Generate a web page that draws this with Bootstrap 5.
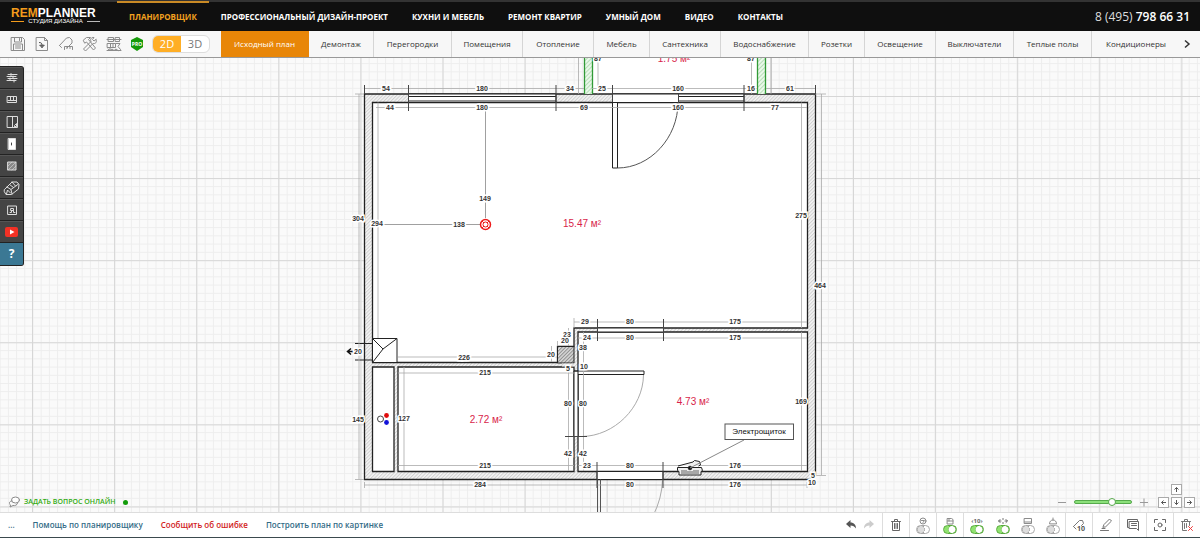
<!DOCTYPE html>
<html lang="ru">
<head>
<meta charset="utf-8">
<meta name="viewport" content="width=device-width, initial-scale=1">
<title>Remplanner — планировщик</title>
<link href="https://cdn.jsdelivr.net/npm/bootstrap@5.3.0/dist/css/bootstrap.min.css" rel="stylesheet">
<style>
  body { font-family: "Open Sans", "Noto Sans", sans-serif; font-size: 8px; line-height: 12px; color: #444; background: #fff; }
  a { text-decoration: none; }
  button { border: 0; padding: 0; background: none; color: inherit; }
  svg { display: block; }
  .ico { fill: none; stroke: #8b8b8b; stroke-width: 1; stroke-linejoin: round; stroke-linecap: round; }

  .site-head { height: 31px; background: #0f0f0f; border-top: 2px solid #333; }
  .brand { width: 89px; margin-left: 11px; margin-right: 17px; font-family: "Liberation Sans", Arial, sans-serif; color: #fff; }
  .brand-name { font-size: 12px; line-height: 10px; font-weight: 700; }
  .brand-name span { color: #f39c1c; }
  .brand-sub { font-size: 6px; line-height: 7px; white-space: nowrap; }
  .brand-sub::before, .brand-sub::after { content: ""; flex: 1; height: 1px; background: #b9b9b9; }
  .brand-sub::before { background: #f39c1c; }
  .site-nav a { color: #fff; font-weight: 700; line-height: 27px; padding: 0 12px; white-space: nowrap; border-top: 2px solid transparent; margin-top: -1px; }
  .site-nav a.current { color: #f2a11f; border-color: #c98a25; }
  .phone { font-size: 12px; color: #ddd; margin-right: 10px; white-space: nowrap; }
  .phone b { font-weight: 600; color: #fff; }

  .tool-row { height: 27px; background: #f7f7f7; border-bottom: 1px solid #999; }
  .file-tools { width: 221px; padding-left: 10px; }
  .view-switch { width: 58px; height: 18px; border: 1px solid #ddd; border-radius: 6px; background: #fff; overflow: hidden; font-size: 11px; font-weight: 700; color: #777; }
  .view-switch .on { background: #ffae25; color: #fff; }
  .plan-tabs a { color: #333; border-right: 1px solid #d5d5d5; line-height: 26px; text-align: center; white-space: nowrap; flex: 0 0 auto; }
  .plan-tabs a.current { background: #e88608; color: #fff; border-color: #e88608; }
  .w-xs { width: 56px; } .w-s { width: 65px; } .w-m { width: 71px; } .w-l { width: 78px; } .w-xl { width: 88px; }
  .more { width: 24px; }

  .board { background: #fafafa; min-height: 0; overflow: hidden; }
  .board > svg { position: absolute; inset: 0; width: 100%; height: 100%; }
  .dim text { font: 7px "Liberation Sans", Arial, sans-serif; fill: #333; text-anchor: middle; stroke: #fff; stroke-width: 3px; paint-order: stroke; font-weight: 700; }
  .area text { font: 10px "Liberation Sans", Arial, sans-serif; fill: #d81e4a; text-anchor: middle; }
  .side-menu { position: absolute; left: 0; top: 8px; width: 24px; border: 1px solid #222; border-left: 0; border-radius: 0 3px 3px 0; background: #444; overflow: hidden; }
  .side-menu button { height: 22px; width: 100%; border-bottom: 1px solid #222; border-top: 1px solid #555; }
  .side-menu svg { stroke: #ddd; }
  .side-menu .help { background: #3b7894; border-color: #3b7894; color: #fff; font-size: 12px; font-weight: 700; }
  .ask { position: absolute; left: 9px; bottom: 4px; color: #32ab12; font-weight: 600; font-size: 7px; }
  .dot { width: 5px; height: 5px; border-radius: 50%; background: #129c0a; }
  .zoomer { position: absolute; right: 52px; bottom: 4px; color: #999; }
  .zoomer input { -webkit-appearance: none; appearance: none; width: 58px; height: 4px; border: 1px solid #55aa4b; border-radius: 2px; background: #8ce07b; margin: 0; }
  .zoomer input::-webkit-slider-thumb { -webkit-appearance: none; width: 8px; height: 8px; border-radius: 50%; background: #fff; border: 1px solid #57a94b; }
  .pan { position: absolute; right: 5px; bottom: 4px; display: grid; grid-template-columns: repeat(3, 11px); gap: 2px; }
  .pan button { height: 11px; border: 1px solid #aaa; background: #fff; }
  .pan .up { grid-column: 2; } .pan .left { grid-column: 1; }

  .foot { height: 26px; background: #fff; border-top: 1px solid #ddd; border-bottom: 1px solid #3b4a4e; }
  .foot-links { gap: 18px; font-weight: 600; }
  .foot-links a { color: #336b86; white-space: nowrap; }
  .foot-links a.report { color: #d21d1d; }
  .acts > * { width: 25px; height: 24px; }
  .acts .slim { width: 18px; }
  .acts .cell { width: 27px; border-left: 1px solid #ddd; }
  .flip { appearance: none; width: 14px; height: 9px; border: 1px solid #aaa; border-radius: 5px; background: radial-gradient(circle at 4px 50%, #ddd 3px, #999 4px, #fff 4px); margin: 0; display: block; }
  .flip:checked { border-color: #5aab3f; background: radial-gradient(circle at 8px 50%, #fff 3px, #5aab3f 4px, #90e36f 4px); }
</style>
</head>
<body class="vh-100 d-flex flex-column overflow-hidden">

<header class="site-head d-flex align-items-center flex-shrink-0">
  <a class="brand flex-shrink-0" href="#">
    <div class="brand-name"><span>REM</span>PLANNER</div>
    <div class="brand-sub d-flex align-items-center gap-1">СТУДИЯ ДИЗАЙНА</div>
  </a>
  <nav class="site-nav d-flex align-self-start">
    <a class="current" href="#">ПЛАНИРОВЩИК</a>
    <a href="#">ПРОФЕССИОНАЛЬНЫЙ ДИЗАЙН-ПРОЕКТ</a>
    <a href="#">КУХНИ И МЕБЕЛЬ</a>
    <a href="#">РЕМОНТ КВАРТИР</a>
    <a href="#">УМНЫЙ ДОМ</a>
    <a href="#">ВИДЕО</a>
    <a href="#">КОНТАКТЫ</a>
  </nav>
  <a class="phone ms-auto" href="tel:+74957986631">8 (495) <b>798 66 31</b></a>
</header>

<div class="tool-row d-flex flex-shrink-0">
  <div class="file-tools d-flex align-items-center flex-shrink-0">
    <div class="d-flex align-items-center gap-2">
      <button aria-label="Сохранить"><svg class="ico" width="16" height="16"><path d="M1.500 1.500h11l2 2v11h-13zM4.500 1.500v4.500h7v-4.500M9.500 2.500v2M3.500 14v-6h9v6M5.500 10h5M5.500 12h5"/></svg></button>
      <button aria-label="Загрузить"><svg class="ico" width="16" height="16"><path d="M2.500 1.500h8l3 3v10h-11zM10.500 1.500v3h3"/><path d="M5.500 6.500c2 0 2.500 1 2.500 3v2M6 9.500l2 2 2-2z" stroke="#444"/></svg></button>
      <button aria-label="Рулетка"><svg class="ico" width="16" height="16"><path d="M1.500 9.500l7-7.500 3-.5 2.500 2.500v3l-5 5M1.500 9.500l2 2M6.500 13.500v-3h8v3M9 12.500v-2M12 12.500v-2"/></svg></button>
      <button aria-label="Инструменты"><svg class="ico" width="16" height="16"><path d="M1.500 4l3-2.500h4l-2 2 7 8.500-2 2-7-8-1.500 1zM14 3.500l-2 1.500-1.500-1.500 1.500-2c-3-.5-4 2-3 4l-7.500 7.500 2 2 7.500-7.500c2 .5 4.500-1 3-4"/></svg></button>
      <button aria-label="Смета"><svg class="ico" width="16" height="16"><path d="M2.500 1.500h5v4h-5zM9.500 1.500h4v4h-4zM1 3.500h14M1.500 7.500h8v4h-8zM10 7.500h4l-2 3 2.500 3M4 11.500v2M1 14.500h14M4.500 7.500v4M7 7.500v4M2 13l2 1.500L6 13l2 1.500L10 13l2 1.500"/></svg></button>
      <button aria-label="PRO"><svg width="14" height="16"><path d="M7 1l6 3v7l-6 4-6-4V4z" fill="#159a09"/><text x="7" y="10" text-anchor="middle" font-size="5" font-weight="700" fill="#fff">PRO</text></svg></button>
    </div>
    <div class="view-switch d-flex ms-2"><button class="on w-50">2D</button><button class="w-50">3D</button></div>
  </div>
  <nav class="plan-tabs d-flex flex-grow-1 overflow-hidden">
    <a class="w-xl current" href="#">Исходный план</a>
    <a class="w-s" href="#">Демонтаж</a>
    <a class="w-l" href="#">Перегородки</a>
    <a class="w-m" href="#">Помещения</a>
    <a class="w-m" href="#">Отопление</a>
    <a class="w-xs" href="#">Мебель</a>
    <a class="w-m" href="#">Сантехника</a>
    <a class="w-xl" href="#">Водоснабжение</a>
    <a class="w-xs" href="#">Розетки</a>
    <a class="w-m" href="#">Освещение</a>
    <a class="w-l" href="#">Выключатели</a>
    <a class="w-l" href="#">Теплые полы</a>
    <a class="w-xl border-0" href="#">Кондиционеры</a>
  </nav>
  <button class="more flex-shrink-0" aria-label="Далее"><svg width="24" height="12"><path d="M9 2.500l4 3.500-4 3.500" fill="none" stroke="#333" stroke-width="1.500"/></svg></button>
</div>

<main class="board position-relative flex-grow-1">
  <svg viewBox="0 58 1200 454" preserveAspectRatio="xMidYMid slice">
    <defs>
      <pattern id="fine" width="8.200" height="8.200" patternUnits="userSpaceOnUse" x="32.500" y="96"><path d="M0 .5H8.200M.5 0V8.200" stroke="#ededed"/></pattern>
      <pattern id="coarse" width="82.100" height="82.100" patternUnits="userSpaceOnUse" x="32" y="96"><path d="M0 .5H82.100M.5 0V82.100" stroke="#d6d6d6"/></pattern>
      <pattern id="hatch" width="2.500" height="2.500" patternUnits="userSpaceOnUse" patternTransform="rotate(45)"><path fill="#f4f4f4" d="M0 0h3v3H0z"/><path d="M.5 0V3" stroke="#d0d0d0"/></pattern>
      <pattern id="dense" width="2.500" height="2.500" patternUnits="userSpaceOnUse" patternTransform="rotate(45)"><path fill="#d8d8d8" d="M0 0h3v3H0z"/><path d="M.5 0V3" stroke="#8c8c8c"/></pattern>
      <pattern id="leaf" width="3" height="3" patternUnits="userSpaceOnUse" patternTransform="rotate(45)"><path fill="#eaf8ea" d="M0 0h3v3H0z"/><path d="M.5 0V3" stroke="#b7deb7"/></pattern>
    </defs>
    <rect y="0" x="-400" width="2000" height="1000" fill="url(#fine)"/>
    <rect y="0" x="-400" width="2000" height="1000" fill="url(#coarse)"/>

    <!-- walls -->
    <path fill="#fff" d="M592 50h165v44h-165z"/>
    <path fill="url(#hatch)" stroke="#222" stroke-width="1.300" d="M364.500 94H815.500V475.500H811V479.500H364.500z"/>
    <path fill="#fff" stroke="#222" stroke-width="1.300" d="M372.500 102.500H807.500V328H574V346.500H557.500V362.500H372.500zM372.500 367H394V471.500H372.500zM398 367H574V471.500H398zM578 332H807.500V471.500H578z"/>
    <path fill="url(#dense)" stroke="#222" d="M557.500 346.500H574V363H557.500z"/>
    <path fill="url(#hatch)" d="M562 363.500h13v3h-13z"/>
    <path fill="url(#leaf)" d="M584.500 50h8v44h-8zM757.500 50h8v44h-8z"/>
    <path stroke="#319a36" stroke-width="1.300" d="M584.500 50V94M592.500 50V94M757.500 50V94M765.500 50V94"/>

    <!-- windows, doors, vent shaft -->
    <g fill="#fff" stroke="#222">
      <path d="M408.500 94H556V102.500H408.500zM408.500 96.500H556M408.500 101H556M678.500 94H744V102.500H678.500zM678.500 96.500H744M678.500 101H744"/>
      <path d="M612.500 94H678.500V102.500H612.500zM612.500 102.500H617.500V168H612.500z"/>
      <path d="M597.500 328H663.500V332H597.500zM597 471.500H663V479.500H597zM574 371H578V436.500H574zM574 371H644V374.500H578"/>
      <path d="M372.500 338.500H397V362.500H372.500zM372.500 338.500L383 349L397 338.500M383 349L372.500 362.500"/>
      <path fill="none" d="M355 343.500H372.500M355 360H372.500"/>
      <path fill="none" stroke="#555" d="M678 102.500C678 138 650 168 617.500 168M597.500 479.500V516M600.500 479.500V516"/>
      <path fill="none" stroke="#aaa" d="M643.500 375C643 408 614 436 582 436.500M662.500 480Q662 498 653 516"/>
    </g>
    <path d="M356 351.500H348M351 348.500L347.500 351.500L351 354.500" fill="none" stroke="#111" stroke-width="1.500"/>

    <!-- dimension lines -->
    <g fill="none" stroke="#aaa" stroke-width=".8">
      <path d="M364.500 88.500H584M592 88.500H757M766 88.500H815.500M376 107.500H807M359 94V479.500M378 102.500V338M821.500 94V475M801.500 102.500V328M801.500 332V471M355 94H364M815 94H826M355 479.500H364M364.500 482V488M364.500 485H807M807 482V488M598 50V94M751.500 50V94M578.500 50V94M771 50V94"/>
      <path d="M398 357H557M398 373H574M398 465.500H574M404 367V471M568.500 367V471M583.500 332V471M574 322H807M578 338H807M578 465.500H807M551.500 346V362M568.500 328V346M557.500 341V346M574 318V328M815 475.500H826"/>
      <path stroke="#888" d="M485.500 108V218M378 224.500H480"/>
    </g>
    <path d="M364.500 85V94M408.500 85V111M556 85V111M612.500 85V102M678.500 94V103M744 85V111M815.500 85V94M597.500 319V341M663.500 319V341M597 462V488M663 462V488M565 436.500H587" stroke="#444" fill="none"/>

    <g class="dim">
      <text x="386" y="91">54</text><text x="482" y="91">180</text><text x="570" y="91">34</text><text x="602" y="91">25</text><text x="678" y="91">160</text><text x="751" y="91">16</text><text x="790" y="91">61</text>
      <text x="390" y="110">44</text><text x="482" y="110">180</text><text x="584" y="110">69</text><text x="678" y="110">160</text><text x="775" y="110">77</text>
      <text x="598" y="61">87</text><text x="751" y="61">87</text>
      <text x="485" y="201">149</text><text x="459" y="227">138</text>
      <text x="358" y="221">304</text><text x="377" y="226">294</text><text x="801" y="218">275</text><text x="820" y="288">464</text><text x="801" y="404">169</text>
      <text x="358" y="354">20</text><text x="464" y="360">226</text><text x="485" y="375">215</text><text x="485" y="468">215</text><text x="480" y="487">284</text><text x="404" y="421">127</text><text x="358" y="422">145</text>
      <text x="585" y="324">29</text><text x="630" y="324">80</text><text x="735" y="324">175</text><text x="567" y="337">23</text><text x="565" y="343">20</text><text x="587" y="340">24</text><text x="630" y="340">80</text><text x="735" y="340">175</text>
      <text x="551" y="357">20</text><text x="583" y="350">38</text><text x="568" y="371">5</text><text x="584" y="369">10</text>
      <text x="568" y="406">80</text><text x="583" y="406">80</text><text x="568" y="456">42</text><text x="583" y="456">42</text>
      <text x="587" y="468">23</text><text x="630" y="468">80</text><text x="735" y="468">176</text><text x="630" y="487">80</text><text x="735" y="487">176</text><text x="812" y="485">10</text><text x="813" y="478">5</text>
    </g>
    <g class="area">
      <text x="582" y="227">15.47 м²</text><text x="486" y="423">2.72 м²</text><text x="693" y="405">4.73 м²</text><text x="674" y="62">1.75 м²</text>
    </g>

    <!-- lamp, risers, switchboard -->
    <g fill="none" stroke="#ee1c1c"><circle cx="485.500" cy="224.500" r="5" stroke-width="1.500"/><circle cx="485.500" cy="224.500" r="2.500"/><path d="M482 221l2 2M489 221l-2 2M482 228l2-2M489 228l-2-2"/></g>
    <circle cx="380.500" cy="419" r="3" fill="#fff" stroke="#444"/><circle cx="386.500" cy="415.500" r="2.400" fill="#e00c0c"/><circle cx="386.500" cy="422.500" r="2.400" fill="#1212d8"/>
    <g fill="#eee" stroke="#222"><path d="M677.500 467.500h24l1 3-1.500 1v3.500h-22v-3.500l-1.500-1z"/><path d="M678 466l15-4 1.500-1.500 5 1 1 3.500-2 1"/><path d="M682 470v4M684 470v4M686 470v4M688 471v3M690 471v3M692 471v3M694 470v4M696 470v4M698 470v4" stroke-width=".7"/><circle cx="690" cy="468" r="1.800" fill="#111"/></g>
    <path d="M744 440L690 468" stroke="#888"/>
    <rect x="725" y="424" width="68.500" height="15.500" fill="#fff" stroke="#555"/>
    <text x="759" y="434" text-anchor="middle" font-family="Liberation Sans, Arial, sans-serif" font-size="8" fill="#111">Электрощиток</text>
  </svg>

  <div class="side-menu d-flex flex-column">
    <button aria-label="Стены"><svg class="ico mx-auto" width="16" height="14"><path d="M4 3.500h9M3 5.500h9M4 7.500h9M3 9.500h9M7 2.500v2M9 5v2M6 7v2M10 9v2"/></svg></button>
    <button aria-label="Окна"><svg class="ico mx-auto" width="16" height="14"><path d="M3.500 3.500h9v6h-9zM6.500 3.500v4M9.500 3.500v4M4 7.500h8"/></svg></button>
    <button aria-label="Проёмы"><svg class="ico mx-auto" width="16" height="14"><path d="M3.500 1.500h10v11h-10zM8.500 1.500v11M10.500 10.500l2-2v3h-2"/></svg></button>
    <button aria-label="Двери"><svg class="ico mx-auto" width="16" height="14"><path d="M4.500 1.500h7v11h-7z" fill="#fff"/><path d="M7.500 6v2" stroke="#444"/></svg></button>
    <button aria-label="Полы"><svg class="ico mx-auto" width="16" height="14"><path d="M4 3h8v8H4z" fill="#888"/><path d="M4 7l4-4M4 11l8-8M8 11l4-4" stroke-width=".6"/></svg></button>
    <button aria-label="Материалы"><svg class="ico mx-auto" width="18" height="16"><path d="M1.500 9.500L9 2h5l2 2.500-.5 4.500-7 5.500H3L1.500 12zM4 7l4 2.500 1 4.500M8 9.500L15.500 4M6.500 4.500l4 3M3.500 14l1-4 3 3M9 2l3.500 4"/></svg></button>
    <button aria-label="Объекты"><svg class="ico mx-auto" width="16" height="14"><path d="M4 3h8.500v8.500H4zM6 9.500h1.500v-2h2v2H11M7 5.500h2.500v2H7z"/></svg></button>
    <button aria-label="Видео"><svg class="mx-auto" width="16" height="12" stroke-width="0"><rect x="1" y="1" width="13" height="10" rx="2" fill="#f33125"/><path d="M6 3.500l4.500 2.500L6 8.500z" fill="#fff"/></svg></button>
    <button class="help">?</button>
  </div>

  <a class="ask d-flex align-items-center gap-1" href="#">
    <svg class="ico" width="11" height="12"><ellipse cx="6.500" cy="4" rx="4" ry="3" fill="#fff"/><path d="M3 5C0 5-.5 8 1.500 9L1 11l3-1.500c2 .5 4-.5 4.500-2"/></svg>
    <span>ЗАДАТЬ ВОПРОС ОНЛАЙН</span><span class="dot ms-1"></span>
  </a>
  <div class="zoomer d-flex align-items-center gap-2">
    <button aria-label="Уменьшить"><svg width="8" height="12"><path d="M0 6.500h8" stroke="#999"/></svg></button>
    <input type="range" min="0" max="100" value="68" aria-label="Масштаб">
    <button aria-label="Увеличить"><svg width="8" height="12"><path d="M0 6.500h8M4 2.500v8" stroke="#999"/></svg></button>
  </div>
  <div class="pan">
    <button class="up" aria-label="Вверх"><svg class="mx-auto" width="9" height="9"><path d="M4.500 7V2.500M2.500 4.500l2-2 2 2" fill="none" stroke="#555"/></svg></button>
    <button class="left" aria-label="Влево"><svg class="mx-auto" width="9" height="9"><path d="M7 4.500H2.500M4.500 2.500l-2 2 2 2" fill="none" stroke="#555"/></svg></button>
    <button aria-label="Вниз"><svg class="mx-auto" width="9" height="9"><path d="M4.500 2v4.500M2.500 4.500l2 2 2-2" fill="none" stroke="#555"/></svg></button>
    <button aria-label="Вправо"><svg class="mx-auto" width="9" height="9"><path d="M2 4.500h4.500M4.500 2.500l2 2-2 2" fill="none" stroke="#555"/></svg></button>
  </div>
</main>

<footer class="foot d-flex align-items-center flex-shrink-0">
  <div class="foot-links d-flex ps-2">
    <a href="#">...</a>
    <a href="#">Помощь по планировщику</a>
    <a class="report" href="#">Сообщить об ошибке</a>
    <a href="#">Построить план по картинке</a>
  </div>
  <div class="acts d-flex ms-auto">
    <button class="slim" aria-label="Отменить"><svg class="mx-auto" width="12" height="12"><path d="M1 5l4.500-4v2.500C9 3.500 11 6 11 9.500 9.500 7.500 8 6.500 5.500 6.500V9z" fill="#555"/></svg></button>
    <button class="slim me-1" aria-label="Повторить"><svg class="mx-auto" width="12" height="12"><path d="M11 5L6.500 1v2.500C3 3.500 1 6 1 9.500 2.500 7.500 4 6.500 6.500 6.500V9z" fill="#ccc"/></svg></button>
    <button class="cell" aria-label="Удалить"><svg class="ico mx-auto" width="12" height="14"><path d="M1.500 3.500h9M4.500 3V1.500h3V3M2.500 3.500v9h7v-9M4.500 5.500v5M6 5.500v5M7.500 5.500v5" stroke="#666"/></svg></button>
    <label class="cell d-flex flex-column align-items-center justify-content-center"><svg class="ico" width="12" height="8"><circle cx="6" cy="4" r="3"/><path d="M4.500 3.500h3L6 5.500"/></svg><input class="flip" type="checkbox" aria-label="Площади"></label>
    <label class="cell d-flex flex-column align-items-center justify-content-center"><svg class="ico" width="12" height="8"><path d="M3.500 1.500h4l1.500 1v4.500H3.500zM3.500 4h5.500M5 1.500V4"/></svg><input class="flip" type="checkbox" checked aria-label="Автосохранение"></label>
    <label class="cell d-flex flex-column align-items-center justify-content-center"><svg width="14" height="8"><text x="7" y="6" text-anchor="middle" font-size="6" font-weight="700" fill="#666">‹10›</text></svg><input class="flip" type="checkbox" checked aria-label="Размеры"></label>
    <label class="d-flex flex-column align-items-center justify-content-center"><svg class="ico" width="12" height="8"><path d="M2 4h2M3 2.500L1.500 4 3 5.500M8 4h2M9 2.500L10.500 4 9 5.500M6 1.500v1M6 5.500v1" stroke="#666"/></svg><input class="flip" type="checkbox" checked aria-label="Привязка"></label>
    <label class="d-flex flex-column align-items-center justify-content-center"><svg class="ico" width="12" height="8"><path d="M2.500 1.500h7v5h-7zM2.500 5h7"/></svg><input class="flip" type="checkbox" aria-label="Мебель"></label>
    <label class="d-flex flex-column align-items-center justify-content-center"><svg class="ico" width="12" height="8"><path d="M6 1v2M2.500 6.500c0-2 1.500-3.500 3.500-3.500s3.500 1.500 3.500 3.500z"/></svg><input class="flip" type="checkbox" aria-label="Светильники"></label>
    <button class="cell" aria-label="Измерить"><svg class="ico mx-auto" width="14" height="14"><path d="M1.500 8.500l6-6 3 0 1 3-2 2M1.500 8.500L4 11" stroke="#777"/><text x="9" y="12.500" text-anchor="middle" font-size="7" font-weight="700" fill="#555" stroke="none">10</text></svg></button>
    <button class="cell" aria-label="Рисовать"><svg class="ico mx-auto" width="14" height="14"><path d="M4 9l1-2.500L10.500 1l2 2L7 8.500zM1.500 12.500h8M3 10.500h3" stroke="#777"/></svg></button>
    <button class="cell" aria-label="Комментарий"><svg class="ico mx-auto" width="14" height="14"><path d="M2.500 9.500h-1v-8h10v1M3.500 3.500h9v9l-2-2h-7zM5.500 5.500h5M5.500 7.500h5" stroke="#666"/></svg></button>
    <button class="cell" aria-label="По центру"><svg class="ico mx-auto" width="14" height="14"><path d="M1.500 4.500v-3h3M9.500 1.500h3v3M12.500 9.500v3h-3M4.500 12.500h-3v-3" stroke="#666"/><circle cx="7" cy="7" r="2" stroke="#666"/></svg></button>
    <button class="cell" aria-label="Очистить план"><svg class="ico mx-auto" width="14" height="14"><path d="M1.500 3.500h9M4.500 3V1.500h3V3M2.500 3.500v9h4M9.500 3.500v4M4.500 5.500v5M6.500 5.500v4" stroke="#777"/><path d="M8.500 8.500l4 4M12.500 8.500l-4 4" style="stroke:#ee3c3c"/></svg></button>
  </div>
</footer>

<script src="https://cdn.jsdelivr.net/npm/bootstrap@5.3.0/dist/js/bootstrap.bundle.min.js"></script>
</body>
</html>
